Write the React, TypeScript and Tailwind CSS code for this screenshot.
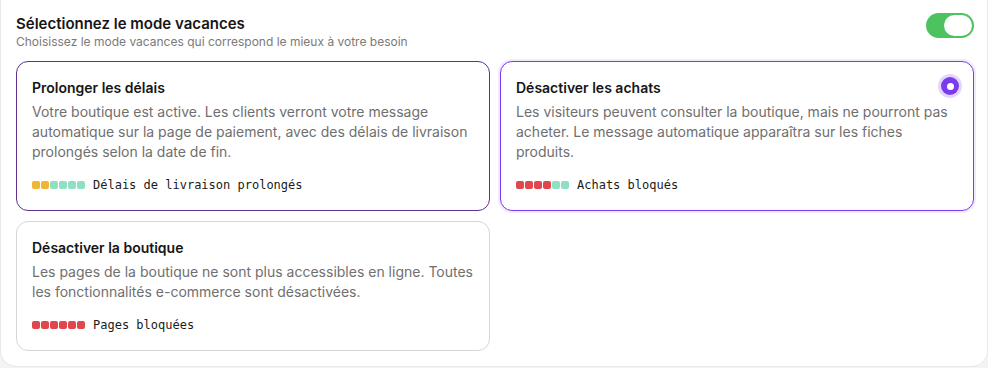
import React from "react";

type Level = "yellow" | "mint" | "red";

const dotColor: Record<Level, string> = {
  yellow: "bg-[#f0b532]",
  mint: "bg-[#8fe0c2]",
  red: "bg-[#e0474c]",
};

const modes: {
  title: string;
  text: string;
  tag: string;
  dots: Level[];
  variant: "hover" | "selected" | "default";
}[] = [
  {
    title: "Prolonger les délais",
    text: "Votre boutique est active. Les clients verront votre message automatique sur la page de paiement, avec des délais de livraison prolongés selon la date de fin.",
    tag: "Délais de livraison prolongés",
    dots: ["yellow", "yellow", "mint", "mint", "mint", "mint"],
    variant: "hover",
  },
  {
    title: "Désactiver les achats",
    text: "Les visiteurs peuvent consulter la boutique, mais ne pourront pas acheter. Le message automatique apparaîtra sur les fiches produits.",
    tag: "Achats bloqués",
    dots: ["red", "red", "red", "red", "mint", "mint"],
    variant: "selected",
  },
  {
    title: "Désactiver la boutique",
    text: "Les pages de la boutique ne sont plus accessibles en ligne. Toutes les fonctionnalités e-commerce sont désactivées.",
    tag: "Pages bloquées",
    dots: ["red", "red", "red", "red", "red", "red"],
    variant: "default",
  },
];

const Toggle = () => (
  <div className="w-[48px] h-[25px] rounded-full bg-[#4cc35e] p-[2px] flex justify-end">
    <div className="w-[28px] h-[21px] rounded-full bg-white" />
  </div>
);

const ModeCard = ({ mode }: { mode: (typeof modes)[number] }) => {
  const border =
    mode.variant === "selected"
      ? "border-[#7c3aed] ring-2 ring-[#f1eafd]"
      : mode.variant === "hover"
      ? "border-[#62308f]"
      : "border-[#d6d6d6]";
  return (
    <div
      className={`relative rounded-xl border bg-white pl-[15px] pr-[12px] pt-[16px] pb-[17px] ${border}`}
    >
      <div className="text-[14px] leading-[20px] font-semibold text-[#161616]">
        {mode.title}
      </div>
      <p className="mt-[4px] text-[14px] leading-[20px] text-[#6f6f6f]">
        {mode.text}
      </p>
      <div className="mt-[15px] flex items-center gap-[8px]">
        <div className="flex gap-[1px]">
          {mode.dots.map((d, i) => (
            <span key={i} className={`w-[8px] h-[8px] rounded-[2px] ${dotColor[d]}`} />
          ))}
        </div>
        <span className="font-['DejaVu_Sans_Mono',monospace] text-[12px] leading-[16px] text-[#1b1b1b]">
          {mode.tag}
        </span>
      </div>
      {mode.variant === "selected" && (
        <div className="absolute right-[14px] top-[15px] w-[18px] h-[18px] rounded-full bg-[#7c3aed] ring-[3px] ring-[#e3d6fb] flex items-center justify-center">
          <div className="w-[7px] h-[7px] rounded-full bg-white" />
        </div>
      )}
    </div>
  );
};

export default function App() {
  return (
    <div className="w-[988px] h-[368px] bg-[#f4f4f4] font-['Inter',sans-serif]">
      <div className="h-[367px] bg-white rounded-b-2xl border-x border-b border-[#e8e8e8] pl-[15px] pr-[13px] pt-[14px]">
        {/* Header */}
        <div className="flex items-start justify-between">
          <div>
            <div className="text-[15px] leading-[20px] font-semibold text-[#161616]">
              Sélectionnez le mode vacances
            </div>
            <div className="text-[12px] leading-[16px] text-[#7a7a7a]">
              Choisissez le mode vacances qui correspond le mieux à votre besoin
            </div>
          </div>
          <div className="mt-[-1px]">
            <Toggle />
          </div>
        </div>

        {/* Modes */}
        <div className="mt-[11px] grid grid-cols-2 gap-x-[10px] gap-y-[10px]">
          {modes.map((m) => (
            <ModeCard key={m.title} mode={m} />
          ))}
        </div>
      </div>
    </div>
  );
}
